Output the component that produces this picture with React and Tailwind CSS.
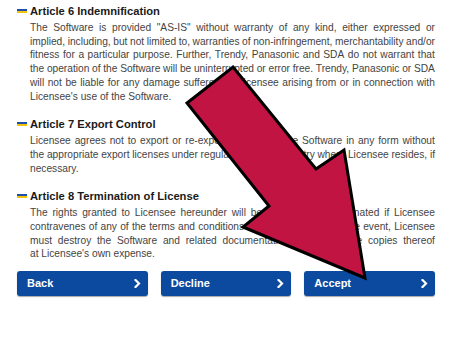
import React from "react";

function Bullet() {
  return (
    <span className="flex flex-col w-[10px] mr-[3px] shrink-0">
      <span className="h-[2px] bg-[#1f4fa8]" />
      <span className="h-[2px] bg-[#f2c40f]" />
    </span>
  );
}

function Line({ text, last }) {
  if (last) return <div className="whitespace-nowrap">{text}</div>;
  const words = text.split(" ");
  return (
    <div className="flex justify-between whitespace-nowrap">
      {words.map((w, i) => (
        <span key={i}>{w}</span>
      ))}
    </div>
  );
}

function Section({ title, lines, className }) {
  return (
    <div className={className}>
      <div className="flex items-center h-[14px] text-[11.2px] font-bold text-[#1a1a1a]">
        <Bullet />
        <span>{title}</span>
      </div>
      <div className="mt-[3px] pl-[13px] text-[10.2px] leading-[13.7px] text-[#444]">
        {lines.map((l, i) => (
          <Line key={i} text={l} last={i === lines.length - 1} />
        ))}
      </div>
    </div>
  );
}

function Chevron() {
  return (
    <svg width="7" height="9" viewBox="0 0 7 9" className="shrink-0">
      <path d="M1.5 1 L5 4.5 L1.5 8" fill="none" stroke="white" strokeWidth="2.2" strokeLinecap="square" />
    </svg>
  );
}

function Btn({ label }) {
  return (
    <button className="flex-1 h-[25px] rounded-[3px] bg-[#0b4a9e] shadow-[0_1px_1px_rgba(0,0,0,0.35)] flex items-center justify-between pl-[10px] pr-[7px] text-white text-[11px] font-bold">
      <span>{label}</span>
      <Chevron />
    </button>
  );
}

const art6 = [
  'The Software is provided "AS-IS" without warranty of any kind, either expressed or',
  "implied, including, but not limited to, warranties of non-infringement, merchantability and/or",
  "fitness for a particular purpose. Further, Trendy, Panasonic and SDA do not warrant that",
  "the operation of the Software will be uninterrupted or error free. Trendy, Panasonic or SDA",
  "will not be liable for any damage suffered by Licensee arising from or in connection with",
  "Licensee's use of the Software.",
];
const art7 = [
  "Licensee agrees not to export or re-export any part of the Software in any form without",
  "the appropriate export licenses under regulations of the country where Licensee resides, if",
  "necessary.",
];
const art8 = [
  "The rights granted to Licensee hereunder will be automatically terminated if Licensee",
  "contravenes of any of the terms and conditions of this Agreement. In the event, Licensee",
  "must destroy the Software and related documentation and all of the copies thereof",
  "at Licensee's own expense.",
];

export default function App() {
  return (
    <div
      className="relative w-[460px] h-[345px] bg-white overflow-hidden"
      style={{ fontFamily: '"Liberation Sans", Arial, sans-serif' }}
    >
      <div className="pl-[17px] pr-[25px] pt-[4px]">
        <Section title="Article 6 Indemnification" lines={art6} />
        <Section title="Article 7 Export Control" lines={art7} className="mt-[14px]" />
        <Section title="Article 8 Termination of License" lines={art8} className="mt-[14px]" />
        <div className="mt-[10px] flex gap-[13px]">
          <Btn label="Back" />
          <Btn label="Decline" />
          <Btn label="Accept" />
        </div>
      </div>

      <svg
        className="absolute left-0 top-0 pointer-events-none"
        width="460"
        height="345"
        viewBox="0 0 460 345"
      >
        <polygon
          points="233,67 316,169 344,150 365,278 243,227 269,206 187,103"
          fill="#c11443"
          stroke="#000"
          strokeWidth="3"
          strokeLinejoin="miter"
        />
      </svg>
    </div>
  );
}
